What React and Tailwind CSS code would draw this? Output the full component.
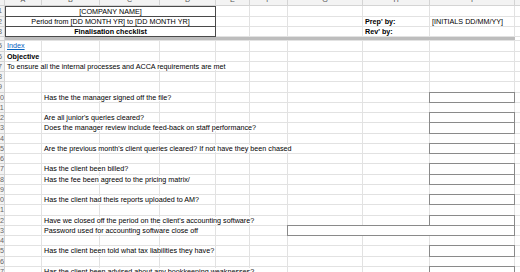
import React from 'react';

// column widths of the sheet (row header, A..I, then a sliver of J)
const W = {
  hdr: 'w-[5px]',
  A: 'w-[37px]',
  B: 'w-[58px]',
  C: 'w-[60px]',
  D: 'w-[56px]',
  E: 'w-[34px]',
  F: 'w-[38px]',
  G: 'w-[75px]',
  H: 'w-[67px]',
  I: 'w-[85px]',
  J: 'w-[60px]',
};

const letters = ['A', 'B', 'C', 'D', 'E', 'F', 'G', 'H', 'I', 'J'];
const ROW = 'h-[10.25px]';
const GRID = 'border-r border-b border-[#e2e2e2]';

const body = [
  { n: 5, a: <span className="text-[#0563c1] underline">Index</span> },
  { n: 6, a: <span className="font-bold">Objective</span> },
  { n: 7, a: 'To ensure all the internal processes and ACCA requirements are met' },
  { n: 8 },
  { n: 9 },
  { n: 10, b: 'Has the the manager signed off the file?', box: true },
  { n: 11 },
  { n: 12, b: "Are all junior's queries cleared?", box: true },
  { n: 13, b: 'Does the manager review include feed-back on staff performance?', box: true },
  { n: 14 },
  { n: 15, b: "Are the previous month's client queries cleared? If not have they been chased", box: true },
  { n: 16 },
  { n: 17, b: 'Has the client been billed?', box: true },
  { n: 18, b: 'Has the fee been agreed to the pricing matrix/', box: true },
  { n: 19 },
  { n: 20, b: 'Has the client had theis reports uploaded to AM?', box: true },
  { n: 21 },
  { n: 22, b: "Have we closed off the period on the client's accounting software?", box: true },
  { n: 23, b: 'Password used for accounting software close off', wide: true },
  { n: 24 },
  { n: 25, b: 'Has the client been told what tax liabilities they have?', box: true },
  { n: 26 },
  { n: 27, b: 'Has the client been advised about any bookkeeping weaknesses?', box: true },
  { n: 28 },
];

// row header is scrolled mostly out of view, only its right edge shows
function RowNum({ n, h = ROW }) {
  return (
    <div className={`${W.hdr} ${h} shrink-0 overflow-hidden bg-[#f3f3f3] border-r border-b border-[#d4d4d4] flex items-center text-[#666]`}>
      <div className="w-[20px] -ml-[10px] shrink-0 text-center">{n}</div>
    </div>
  );
}

function Cell({ w, children, box, className = '' }) {
  return (
    <div className={`${w} ${ROW} shrink-0 relative ${GRID} flex items-center ${className}`}>
      {children && (
        <span className="relative z-10 bg-white whitespace-nowrap pl-[2px] pr-[1px]">{children}</span>
      )}
      {box && <div className="absolute -top-px -left-px right-[-1px] bottom-[-1px] border border-[#8a8a8a] z-20" />}
    </div>
  );
}

function BodyRow({ r }) {
  return (
    <div className="flex">
      <RowNum n={r.n} />
      <Cell w={W.A}>{r.a}</Cell>
      <Cell w={W.B}>{r.b}</Cell>
      <Cell w={W.C} />
      <Cell w={W.D} />
      <Cell w={W.E} />
      <Cell w={W.F} />
      {r.wide ? (
        <Cell w="w-[227px]" box />
      ) : (
        <>
          <Cell w={W.G} />
          <Cell w={W.H} />
          <Cell w={W.I} box={r.box} />
        </>
      )}
      <Cell w={W.J} />
    </div>
  );
}

function TitleRow({ n, text, bold, h, i, first }) {
  return (
    <div className="flex">
      <RowNum n={n} />
      <div className={`w-[211px] ${ROW} shrink-0 flex items-center justify-center border-x border-b border-[#4a4a4a] ${first ? 'border-t' : ''} ${bold ? 'font-bold' : ''}`}>
        {text}
      </div>
      <Cell w={W.E} />
      <Cell w={W.F} />
      <Cell w={W.G} />
      <Cell w={W.H}>{h && <span className="font-bold">{h}</span>}</Cell>
      <Cell w={W.I}>{i}</Cell>
      <Cell w={W.J} />
    </div>
  );
}

export default function App() {
  return (
    <div
      className="w-[520px] h-[272px] overflow-hidden bg-white text-black text-[7.2px] leading-none"
      style={{ fontFamily: '"Liberation Sans", Arial, sans-serif' }}
    >
      <div className="-mt-[10px]">
        {/* column letters */}
        <div className="flex h-[16.25px]">
          <div className={`${W.hdr} shrink-0 bg-[#f3f3f3] border-r border-b border-[#d4d4d4]`} />
          {letters.map((l) => (
            <div
              key={l}
              className={`${W[l]} shrink-0 bg-[#f3f3f3] border-r border-b border-[#d4d4d4] flex items-end justify-center pb-[2px] text-[#555]`}
            >
              {l}
            </div>
          ))}
        </div>

        <TitleRow n={1} text="[COMPANY NAME]" first />
        <TitleRow n={2} text="Period from [DD MONTH YR] to [DD MONTH YR]" h="Prep' by:" i="[INITIALS DD/MM/YY]" />
        <TitleRow n={3} text="Finalisation checklist" bold h="Rev' by:" />

        {/* divider row */}
        <div className="flex h-[4.25px]">
          <div className={`${W.hdr} shrink-0 bg-[#f3f3f3] border-r border-b border-[#d4d4d4]`} />
          <div className="w-[510px] shrink-0 bg-[#bdbdbd] border-b border-[#e2e2e2]" />
          <div className={`${W.J} shrink-0 border-b border-[#e2e2e2]`} />
        </div>

        {body.map((r) => (
          <BodyRow key={r.n} r={r} />
        ))}
      </div>
    </div>
  );
}
